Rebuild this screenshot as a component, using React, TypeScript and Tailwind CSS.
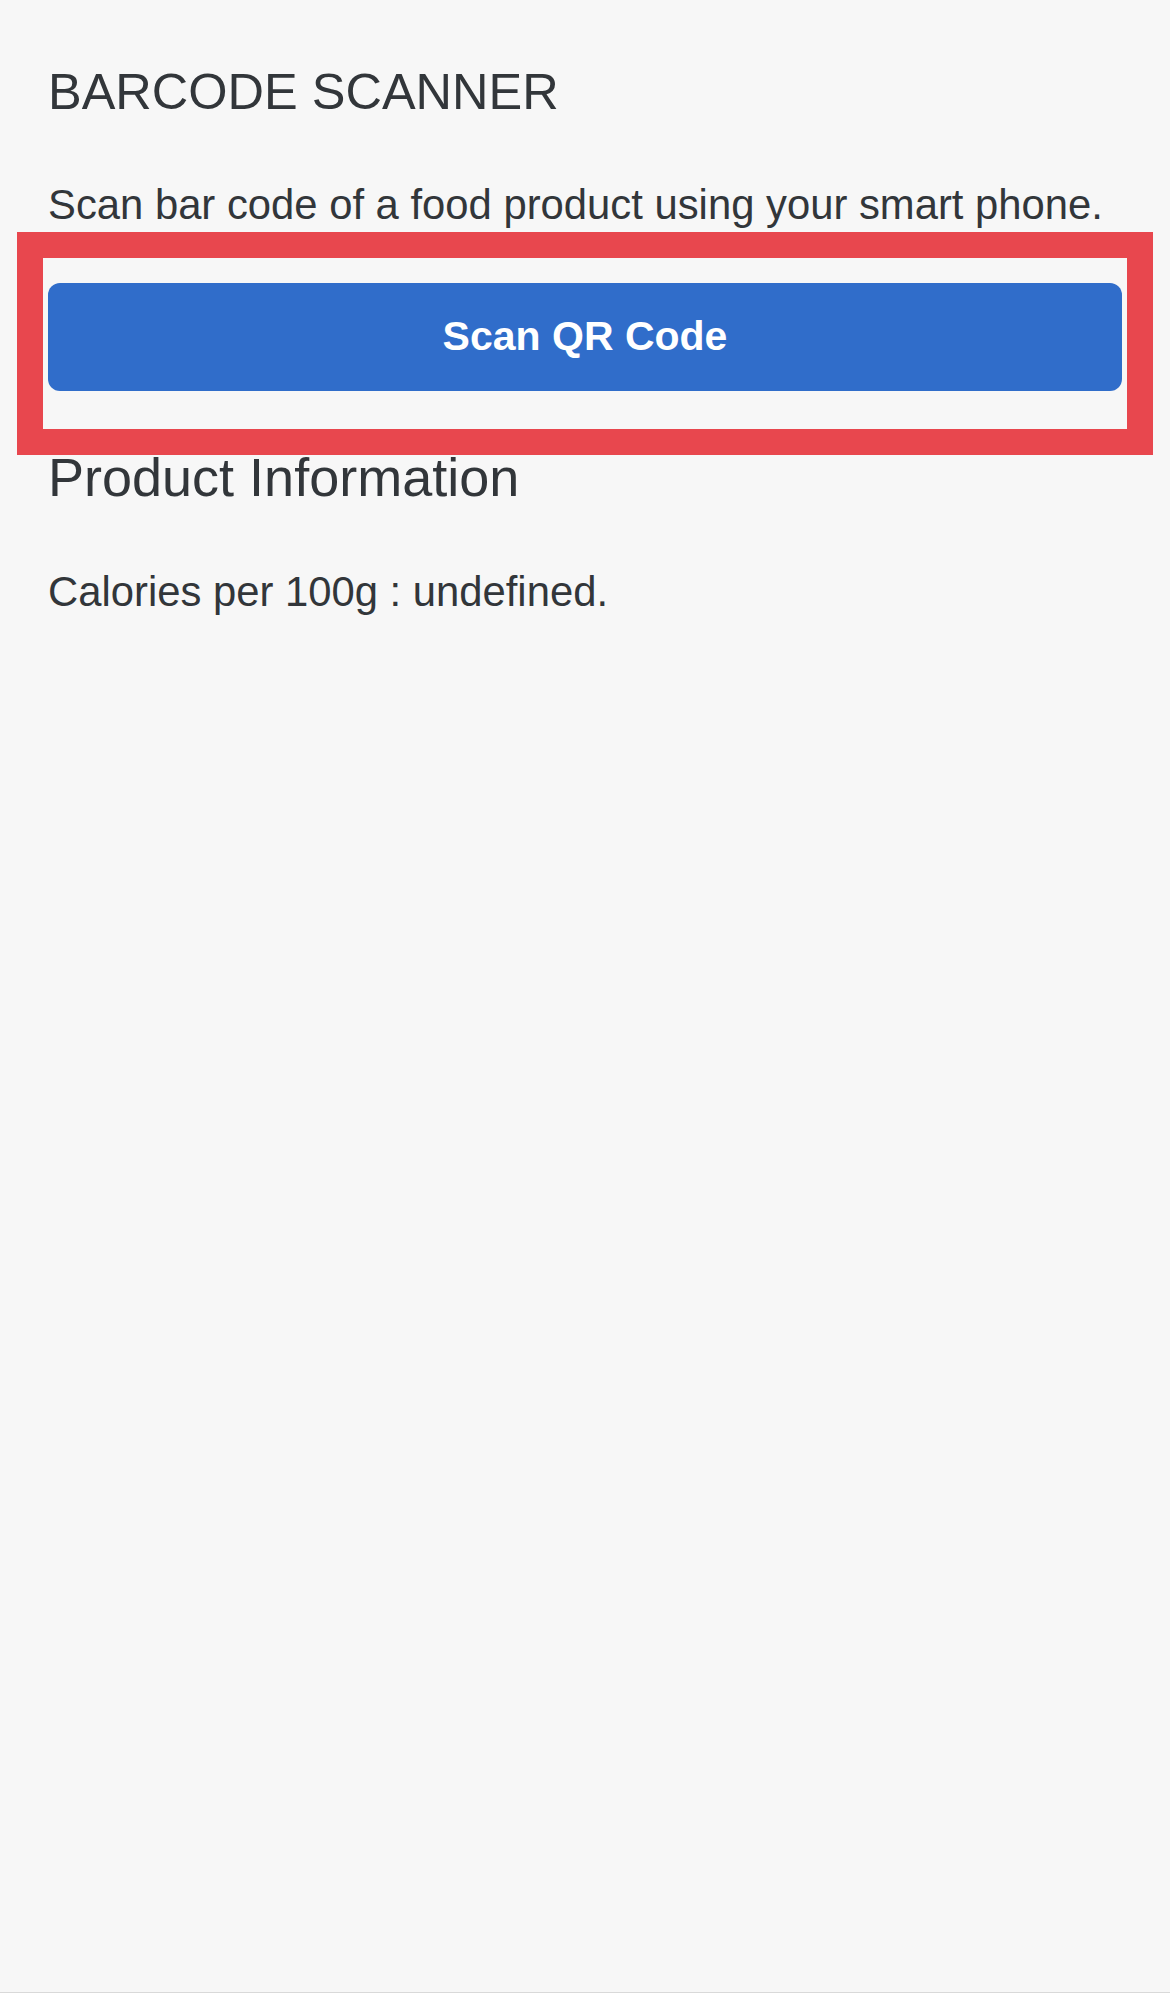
export default function App() {
  return (
    <div
      className="relative min-h-[1993px] bg-[#f7f7f7] border-b border-[#d9d9d9] text-[#32363a]"
      style={{ fontFamily: '"Liberation Sans", Arial, sans-serif' }}
    >
      <div className="px-[48px] pt-[62px]">
        <h1 className="text-[50.5px] leading-[60px] font-normal">BARCODE SCANNER</h1>

        <p className="mt-[58px] text-[41.8px] leading-[50px]">
          Scan bar code of a food product using your smart phone.
        </p>

        <button className="mt-[53px] w-full h-[108px] rounded-[12px] bg-[#306dca] text-white text-[41px] font-bold flex items-center justify-center">
          Scan QR Code
        </button>

        <h2 className="mt-[56px] text-[54px] leading-[60px] font-normal">Product Information</h2>

        <p className="mt-[60px] text-[41.8px] leading-[50px]">Calories per 100g : undefined.</p>
      </div>

      {/* highlight frame drawn over the button */}
      <div className="absolute left-[17px] top-[232px] w-[1136px] h-[223px] border-[26px] border-[#e8474e] pointer-events-none" />
    </div>
  );
}
